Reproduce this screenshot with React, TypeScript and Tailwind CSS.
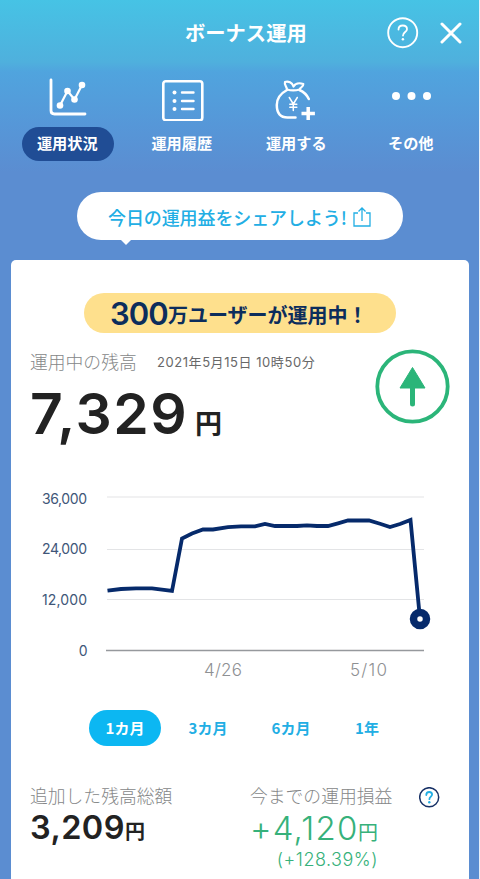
import type { ReactNode } from "react"
import clsx from "clsx"

const jp = "font-['Noto_Sans_CJK_JP',sans-serif]"
const num = "font-['Inter','Noto_Sans_CJK_JP',sans-serif]"

const ChartIcon = () => (
  <svg width="44" height="44" viewBox="0 0 44 44" fill="none" stroke="white" strokeLinecap="round" strokeLinejoin="round">
    <path d="M5 3V33.5Q5 37 8.500 37H39" strokeWidth="2.8" />
    <path d="M14 28.500L21.500 14L28.500 22.500L36 8" strokeWidth="2.200" />
    <g fill="white" stroke="none">
      <circle cx="14" cy="28.500" r="3.300" />
      <circle cx="21.500" cy="14" r="3.300" />
      <circle cx="28.500" cy="22.500" r="3.300" />
      <circle cx="36" cy="8" r="3.300" />
    </g>
  </svg>
)

const ListIcon = () => (
  <svg width="44" height="44" viewBox="0 0 44 44" fill="none" stroke="white" strokeLinecap="round">
    <rect x="2.300" y="4.200" width="39" height="39" rx="2.500" strokeWidth="2.600" />
    <path d="M21 15.500H32.500M21 24H32.500M21 32H32.500" strokeWidth="2.400" />
    <g fill="white" stroke="none">
      <circle cx="13.500" cy="15.500" r="2" />
      <circle cx="13.500" cy="24" r="2" />
      <circle cx="13.500" cy="32" r="2" />
    </g>
  </svg>
)

const MoneyBagIcon = () => (
  <svg width="44" height="44" viewBox="0 0 44 44" fill="none" stroke="white" strokeLinecap="round" strokeLinejoin="round">
    <path d="M12 13C5.500 16.500 1.800 22 1.800 28C1.800 36 5.500 40.500 12.500 40.500H20.500M24.500 13C29 15 32 18 33.800 22" strokeWidth="2.500" />
    <path
      d="M18.500 9.500C17.500 5.500 13 3.800 10 5C9 8 11.500 9 12 12.500C15.500 13.500 21 13.500 24.500 12.500C25.500 10 28.500 10 28.300 7C24 5.500 20 6.500 18.500 9.500Z"
      strokeWidth="2.200"
    />
    <path d="M14.300 20.500L18.300 27L22.300 20.500M18.300 27V33.500M14.800 27.300H21.800M14.800 30.300H21.800" strokeWidth="1.500" />
    <path d="M33.200 30V43M26.500 36.500H39.900" strokeWidth="3.500" strokeLinecap="butt" />
  </svg>
)

const MoreIcon = () => (
  <svg width="44" height="44" viewBox="0 0 44 44" fill="white">
    <circle cx="6" cy="19" r="4" />
    <circle cx="21.500" cy="19" r="4" />
    <circle cx="37" cy="19" r="4" />
  </svg>
)

const tabs: { icon: ReactNode; label: string; active?: boolean }[] = [
  { icon: <ChartIcon />, label: "運用状況", active: true },
  { icon: <ListIcon />, label: "運用履歴" },
  { icon: <MoneyBagIcon />, label: "運用する" },
  { icon: <MoreIcon />, label: "その他" },
]

const periods = [
  { label: "1カ月", className: "w-[72px] bg-[#0cb7f2] text-white" },
  { label: "3カ月", className: "ml-[10px] w-[74px] text-[#22aee4]" },
  { label: "6カ月", className: "ml-[9px] w-[74px] text-[#22aee4]" },
  { label: "1年", className: "ml-[9px] w-[60px] text-[#22aee4]" },
]

const gridLines = [
  { y: 12, label: "36,000", labelY: 19 },
  { y: 64.500, label: "24,000", labelY: 69 },
  { y: 114.500, label: "12,000", labelY: 120 },
]

function BalanceChart() {
  return (
    <svg width="410" height="204" viewBox="0 0 410 204" className={num}>
      {gridLines.map((line) => (
        <g key={line.label}>
          <path d={`M77 ${line.y}H394`} stroke="#e3e4e6" strokeWidth="1.200" />
          <text x="57" y={line.labelY} textAnchor="end" fontSize="14" fill="#405678" textLength="45">
            {line.label}
          </text>
        </g>
      ))}
      <path d="M76 165.500H394" stroke="#96999d" strokeWidth="1.400" />
      <text x="57.500" y="171" textAnchor="end" fontSize="14" fill="#405678">0</text>
      <text x="174" y="190.500" fontSize="17" fontWeight="300" fill="#8e9093" textLength="38">4/26</text>
      <text x="320" y="190.500" fontSize="17" fontWeight="300" fill="#8e9093" textLength="37">5/10</text>
      <path
        d="M77.500 105.700L91 104L106 103.300L122 103.300L142 106L152 53.500L162 48.500L173 44.500H183L198 42.200L211 41.300H225L235 39L245 41H267L277 40.400L287 41H298L308 38.300L318 35.500H339L350 38.800L360 42L370 39L380.500 35L390 134"
        fill="none"
        stroke="#062a6b"
        strokeWidth="3.800"
      />
      <circle cx="390" cy="134" r="6.500" fill="white" stroke="#062a6b" strokeWidth="7.500" />
    </svg>
  )
}

export default function App() {
  return (
    <div className={clsx("h-[879px] w-[480px] overflow-hidden border-r border-[#e9f1fa] bg-[#5b8dd1]", jp)}>
      <div className="h-[190px] bg-[linear-gradient(#46c3e5_0px,#4fb0dd_62px,#50a4de_72px,#5697d8_125px,#5b8dd1_172px)]">
        <header className="flex h-[66px] items-center">
          <h1 className="ml-[185px] w-[202px] pb-[2px] text-[20.300px] leading-none font-bold whitespace-nowrap text-white">ボーナス運用</h1>
          <svg width="32" height="32" viewBox="0 0 32 32" fill="none" stroke="white" strokeLinecap="round">
            <circle cx="15.700" cy="15.700" r="14.500" strokeWidth="1.900" />
            <path d="M11.500 12.500C11.500 9.500 13.500 8.500 15.800 8.500C18.200 8.500 20 10 20 12.200C20 15 16 15.200 16 18.500" strokeWidth="1.800" />
            <circle cx="15.900" cy="22.300" r="1.250" fill="white" stroke="none" />
          </svg>
          <svg className="ml-[21px]" width="22" height="22" viewBox="0 0 22 22" stroke="white" strokeWidth="3" strokeLinecap="round">
            <path d="M2 2L20 20M20 2L2 20" />
          </svg>
        </header>
        <nav className="ml-[11px] flex pt-[11px]">
          {tabs.map((tab) => (
            <div key={tab.label} className="flex w-[114.500px] flex-col items-center">
              {tab.icon}
              <div
                className={clsx(
                  "mt-[6px] flex h-[34px] w-[92px] items-center justify-center rounded-full pr-[2px] pb-[2px] text-[15.200px] leading-none font-bold text-white",
                  tab.active && "bg-[#204d95]",
                )}
              >
                {tab.label}
              </div>
            </div>
          ))}
        </nav>
      </div>

      <div className="relative mt-[2px] ml-[77px] flex h-[48px] w-[326px] items-center rounded-full bg-white pl-[31px] text-[#22aee4]">
        <span className="w-[245px] pt-[2px] text-[18px] leading-none font-medium tracking-[-0.100px] whitespace-nowrap">
          今日の運用益をシェアしよう!
        </span>
        <svg className="mt-[2px]" width="18" height="22" viewBox="0 0 18 22" fill="none" stroke="currentColor" strokeWidth="1.300">
          <path d="M5 7H1V20H17V7H13M9 15V2M5.500 5.500L9 2L12.500 5.500" />
        </svg>
        <div className="absolute top-[47px] left-[43px] h-0 w-0 border-x-[6px] border-t-[6px] border-x-transparent border-t-white" />
      </div>

      <main className="mt-[20px] ml-[11px] h-[619px] w-[458px] rounded-t-[5px] bg-white pt-[33px]">
        <div className="ml-[73px] flex h-[40px] w-[312px] items-center rounded-full bg-[#fee08d] pl-[26px] font-bold whitespace-nowrap text-[#0c2d5c]">
          <span className={clsx("w-[58px] text-[31px] leading-none font-semibold tracking-[-0.900px]", num)}>300</span>
          <span className="pt-[3px] text-[20px] leading-none">万ユーザーが運用中！</span>
        </div>

        <section className="flex h-[112px] pl-[19px]">
          <div className="w-[345px]">
            <div className="mt-[19px] flex h-[20px] items-center whitespace-nowrap">
              <span className="w-[127px] text-[17.800px] leading-none font-light text-[#858788]">運用中の残高</span>
              <span className={clsx("text-[13px] leading-none tracking-[0.560px] text-[#686868]", num)}>2021年5月15日 10時50分</span>
            </div>
            <div className="mt-[13px] flex items-baseline leading-none text-[#222]">
              <span className={clsx("w-[165px] text-[57px] leading-none font-semibold tracking-[1.500px]", num)}>7,329</span>
              <span className="text-[27px] leading-none font-bold">円</span>
            </div>
          </div>
          <svg className="mt-[16px]" width="75" height="75" viewBox="0 0 75 75">
            <circle cx="37.500" cy="37.500" r="35.200" fill="none" stroke="#2bb579" strokeWidth="3.800" />
            <path d="M37.500 18.500L50 39H25Z" fill="#2bb579" stroke="#2bb579" strokeLinejoin="round" />
            <path d="M37.500 38V55" stroke="#2bb579" strokeWidth="5" strokeLinecap="round" />
          </svg>
        </section>

        <section className="mt-[40px] ml-[19px] h-[204px]">
          <BalanceChart />
        </section>

        <div className="mt-[21px] ml-[78px] flex">
          {periods.map((period) => (
            <div
              key={period.label}
              className={clsx("flex h-[36px] items-center justify-center rounded-full pb-[2px] text-[15px] leading-none font-bold", period.className)}
            >
              {period.label}
            </div>
          ))}
        </div>

        <section className="mt-[40px] ml-[19px] flex whitespace-nowrap">
          <div className="w-[220px]">
            <div className="flex h-[20px] items-center text-[17.800px] leading-none font-light text-[#858788]">追加した残高総額</div>
            <div className="mt-[6px] flex items-baseline text-[#222]">
              <span className={clsx("w-[95px] text-[32.500px] leading-none font-semibold tracking-[0.400px]", num)}>3,209</span>
              <span className="text-[20px] leading-none font-bold">円</span>
            </div>
          </div>
          <div className="w-[169px] text-[#36b17a]">
            <div className="flex h-[20px] items-center text-[17.800px] leading-none font-light text-[#858788]">今までの運用損益</div>
            <div className="mt-[6px] flex items-baseline">
              <span className={clsx("w-[108px] text-[33px] leading-none font-light tracking-[1.200px]", num)}>+4,120</span>
              <span className="text-[20px] leading-none">円</span>
            </div>
            <div className={clsx("mt-[6px] w-[128px] text-right text-[18px] leading-none font-light tracking-[0.500px]", num)}>(+128.39%)</div>
          </div>
          <svg className="mt-px" width="22" height="22" viewBox="0 0 22 22" fill="none" strokeLinecap="round">
            <circle cx="10.200" cy="10.200" r="9.500" stroke="#173166" strokeWidth="1.500" />
            <path d="M7.300 8C7.300 6 8.500 5 10.200 5C12 5 13.100 6.100 13.100 7.600C13.100 9.500 10.400 9.800 10.400 12.200" stroke="#22aee4" strokeWidth="1.800" />
            <circle cx="10.300" cy="15.200" r="1.200" fill="#22aee4" />
          </svg>
        </section>
      </main>
    </div>
  )
}
